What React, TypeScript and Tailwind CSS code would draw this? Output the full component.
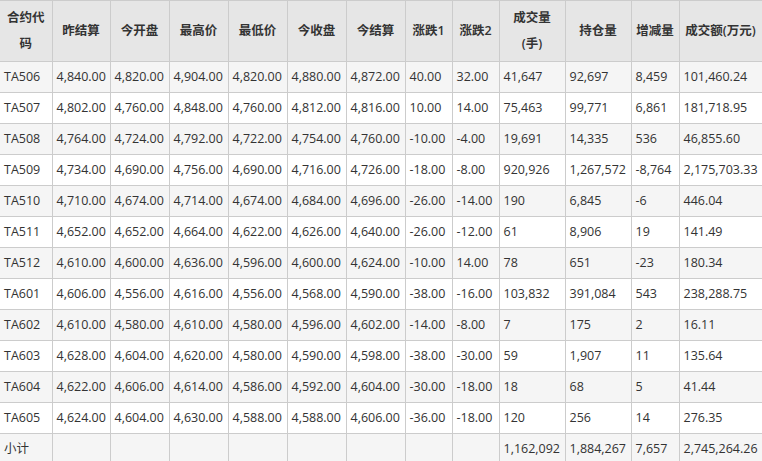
const W = [52, 58, 59, 59, 59, 59, 59, 47, 47, 66, 66, 48, 83];
const H = ["合约代码", "昨结算", "今开盘", "最高价", "最低价", "今收盘", "今结算", "涨跌1", "涨跌2", "成交量(手)", "持仓量", "增减量", "成交额(万元)"];
const R = [
["TA506","4,840.00","4,820.00","4,904.00","4,820.00","4,880.00","4,872.00","40.00","32.00","41,647","92,697","8,459","101,460.24"],
["TA507","4,802.00","4,760.00","4,848.00","4,760.00","4,812.00","4,816.00","10.00","14.00","75,463","99,771","6,861","181,718.95"],
["TA508","4,764.00","4,724.00","4,792.00","4,722.00","4,754.00","4,760.00","-10.00","-4.00","19,691","14,335","536","46,855.60"],
["TA509","4,734.00","4,690.00","4,756.00","4,690.00","4,716.00","4,726.00","-18.00","-8.00","920,926","1,267,572","-8,764","2,175,703.33"],
["TA510","4,710.00","4,674.00","4,714.00","4,674.00","4,684.00","4,696.00","-26.00","-14.00","190","6,845","-6","446.04"],
["TA511","4,652.00","4,652.00","4,664.00","4,622.00","4,626.00","4,640.00","-26.00","-12.00","61","8,906","19","141.49"],
["TA512","4,610.00","4,600.00","4,636.00","4,596.00","4,600.00","4,624.00","-10.00","14.00","78","651","-23","180.34"],
["TA601","4,606.00","4,556.00","4,616.00","4,556.00","4,568.00","4,590.00","-38.00","-16.00","103,832","391,084","543","238,288.75"],
["TA602","4,610.00","4,580.00","4,610.00","4,580.00","4,596.00","4,602.00","-14.00","-8.00","7","175","2","16.11"],
["TA603","4,628.00","4,604.00","4,620.00","4,580.00","4,590.00","4,598.00","-38.00","-30.00","59","1,907","11","135.64"],
["TA604","4,622.00","4,606.00","4,614.00","4,586.00","4,592.00","4,604.00","-30.00","-18.00","18","68","5","41.44"],
["TA605","4,624.00","4,604.00","4,630.00","4,588.00","4,588.00","4,606.00","-36.00","-18.00","120","256","14","276.35"],
["小计","","","","","","","","","1,162,092","1,884,267","7,657","2,745,264.26"],
];
export default function App() {
  return (
    <div className="w-[762px] h-[461px] overflow-hidden bg-white text-[#333] text-[12.5px]" style={{ fontFamily: '"Open Sans","Noto Sans CJK SC",sans-serif' }}>
      <table className="table-fixed border-collapse" style={{ width: 762 }}>
        <colgroup>{W.map((w, i) => <col key={i} style={{ width: w }} />)}</colgroup>
        <thead>
          <tr className="bg-[#e6e6e6] h-[61px]">
            {H.map((h, i) => (
              <th key={i} className={`border border-[#ccc] font-semibold px-[4px] leading-[26px] text-center ${i===0 ? "border-l-0":""}`}>
                {i === 9 ? <>成交量<br />(手)</> : h}
              </th>
            ))}
          </tr>
        </thead>
        <tbody>
          {R.map((r, ri) => (
            <tr key={ri} className={`h-[31px] ${ri % 2 === 0 ? "bg-[#f5f5f5]" : "bg-white"}`}>
              {r.map((c, ci) => (
                <td key={ci} className={`border border-[#ccc] px-[4px] whitespace-nowrap overflow-hidden ${ci===0 ? "border-l-0":""}`}>{c}</td>
              ))}
            </tr>
          ))}
        </tbody>
      </table>
    </div>
  );
}
